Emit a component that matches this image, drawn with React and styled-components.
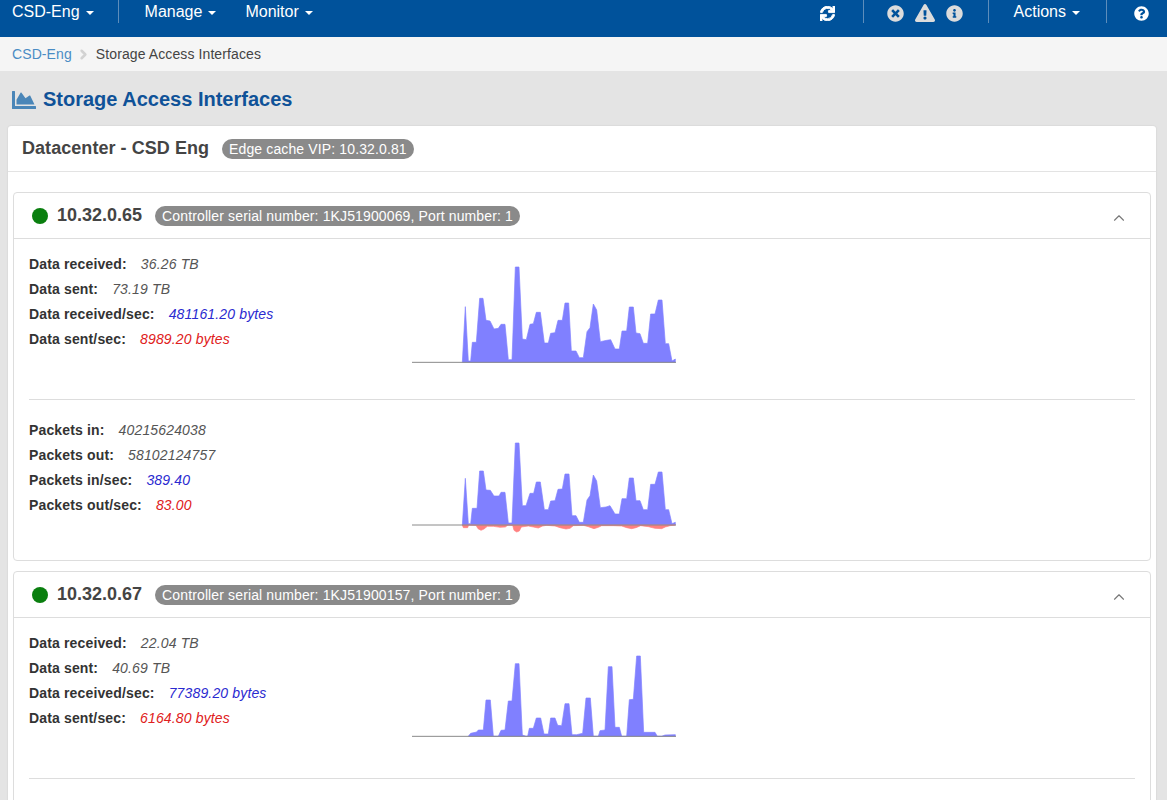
import React from 'react';
import styled, { createGlobalStyle } from 'styled-components';
import { FaSync, FaTimesCircle, FaExclamationTriangle, FaInfoCircle, FaQuestionCircle, FaChartArea } from 'react-icons/fa';
import { ChevronUp, ChevronRight } from 'lucide-react';

const Global = createGlobalStyle`
  html, body { margin: 0; padding: 0; height: 800px; overflow: hidden; background: #e4e4e4; }
  body { font-family: "Liberation Sans", Arial, sans-serif; font-size: 14px; color: #333; }
  * { box-sizing: border-box; }
`;
const Page = styled.div`height: 800px; overflow: hidden;`;
const Nav = styled.nav`
  height: 37px; background: #00529b; color: #fff; display: flex; align-items: flex-start;
  justify-content: space-between; font-size: 16px;
`;
const NavGroup = styled.div`display: flex; align-items: flex-start;`;
const NavItem = styled.div`
  height: 23px; line-height: 23px; display: flex; align-items: center; gap: 6px; white-space: nowrap;
  padding: 0 ${p => p.$right ?? 0}px 0 ${p => p.$left ?? 0}px;
`;
const Caret = styled.span`
  width: 0; height: 0; border-left: 4px solid transparent; border-right: 4px solid transparent;
  border-top: 4px solid #fff; margin-top: 2px;
`;
const Sep = styled.span`width: 1px; height: 23px; background: #5d8dbb;`;
const IconBtn = styled.span`
  display: flex; align-items: center; justify-content: center; width: ${p => p.$w}px; height: 26px;
  padding-left: ${p => p.$pad || 0}px;
  color: ${p => p.$c || '#fff'}; font-size: ${p => p.$s || 16}px;
  svg { stroke: currentColor; stroke-width: ${p => p.$bold || 0}; }
`;
const IconGroup = styled.div`display: flex; padding: 0 19px;`;
const Crumbs = styled.div`
  height: 34px; background: #f5f5f5; display: flex; align-items: center; padding-left: 12px;
  font-size: 14px; letter-spacing: .1px; color: #444;
`;
const CrumbLink = styled.a`color: #4a8cc4;`;
const CrumbSep = styled.span`display: flex; width: 24px; justify-content: center; color: #d2d2d2;`;
const TitleRow = styled.h1`
  margin: 0; height: 55px; display: flex; align-items: center; gap: 7px; padding: 2px 0 0 12px;
  font-size: 20px; font-weight: 700; color: #0f5298;
  svg { color: #4a86b8; font-size: 24px; }
`;
const Card = styled.section`
  margin: 0 11px 0 8px; background: #fff; border-radius: 3px; box-shadow: 0 0 2px rgba(0,0,0,.12);
`;
const CardHead = styled.header`
  height: 46px; display: flex; align-items: center; gap: 13px; padding: 0 0 0 14px; border-bottom: 1px solid #e3e3e3;
`;
const CardTitle = styled.h2`margin: 0; font-size: 18px; font-weight: 700; color: #444; letter-spacing: .05px;`;
const Badge = styled.span`
  background: #8a8a8a; color: #fff; font-size: 14px; line-height: 20px; height: 20px; padding: 0 7px;
  border-radius: 10px; white-space: nowrap; letter-spacing: .13px;
`;
const Panels = styled.div`padding: 20px 5px 0; display: flex; flex-direction: column; gap: 10px;`;
const Panel = styled.article`border: 1px solid #ddd; border-radius: 4px; background: #fff;`;
const PanelHead = styled.header`
  height: 46px; display: flex; align-items: center; padding: 0 22px 0 18px; border-bottom: 1px solid #ddd;
`;
const Dot = styled.span`width: 16px; height: 16px; border-radius: 50%; background: #0a7f0f; margin-right: 9px;`;
const Ip = styled.h3`margin: 0 13px 0 0; font-size: 18px; font-weight: 700; color: #444;`;
const Toggle = styled.span`margin-left: auto; margin-top: 4px; display: flex; color: #777;`;
const Section = styled.div`
  height: 160px; margin: 0 15px; display: grid; grid-template-columns: 383px 264px; align-items: start;
  & + & { border-top: 1px solid #ddd; height: 161px; }
`;
const Stats = styled.dl`margin: 0; padding-top: ${p => p.$top}px; display: flex; flex-direction: column;`;
const Stat = styled.div`height: 25px; line-height: 25px; display: flex; gap: 14px; white-space: nowrap; letter-spacing: .15px;`;
const Key = styled.dt`font-weight: 700; color: #333;`;
const Val = styled.dd`margin: 0; font-style: italic; color: ${p => p.$c || '#555'};`;
const ChartSvg = styled.svg`display: block; width: 264px; height: 150px;`;

const d1 = '187,322 196,155 205,318 212,318 217,262 229,262 239,130 249,130 258,196 270,198 282,222 295,220 303,208 315,208 325,314 336,314 346,36 357,36 367,252 379,254 390,208 400,206 409,172 421,172 433,264 445,264 452,235 465,233 474,196 487,196 495,144 506,144 514,288 528,288 538,308 550,308 561,230 570,218 580,147 590,165 601,260 620,256 632,254 645,282 658,282 666,228 680,228 688,156 700,156 708,234 720,236 730,265 743,265 752,177 765,177 775,135 786,135 796,266 806,266 816,318 826,312 826,322';
const d2 = '187,270 196,130 205,266 212,266 217,220 231,220 239,108 250,108 258,165 271,166 282,183 297,183 303,172 315,172 325,264 336,264 346,24 357,24 367,212 378,212 390,175 401,175 409,141 421,141 433,224 445,224 452,198 465,197 474,163 487,162 495,117 507,117 516,242 528,242 538,262 550,262 561,195 570,182 580,120 590,138 601,218 618,216 630,212 645,237 658,237 666,191 680,191 688,129 700,129 708,197 720,197 730,224 743,224 752,148 765,148 775,111 786,111 796,224 806,224 816,266 826,262 826,270';
const r2 = '187,270 190,278 203,278 206,270 228,271 234,281 243,286 252,282 262,274 280,274 300,277 316,276 324,270 338,271 342,286 350,291 358,288 364,276 385,273 400,276 415,279 428,273 440,271 465,273 480,278 498,282 510,280 520,272 550,271 565,275 582,281 595,277 605,272 640,272 665,273 680,278 695,281 708,278 722,272 745,275 765,280 785,281 796,276 810,272 826,270';
const d3 = '205,259 212,250 230,246 235,240 250,240 258,150 271,150 280,259 295,259 303,241 315,240 325,153 336,153 346,41 357,41 367,255 378,259 383,259 388,235 400,235 409,204 422,204 432,252 445,252 452,204 465,204 473,226 485,227 495,161 507,161 516,254 530,254 548,250 558,144 571,144 580,259 595,259 600,242 615,240 625,50 636,50 645,232 658,232 665,259 680,259 688,149 700,148 710,18 721,18 731,247 765,247 772,259 785,259 795,255 826,254 826,259';

function Chart({ area, red, base, offset }) {
  return (
    <ChartSvg viewBox={`36 ${-offset * 3} 792 450`} preserveAspectRatio="none">
      <polygon points={area} fill="#8080ff" stroke="#8080ff" strokeWidth="2" strokeLinejoin="round" />
      {red && <polygon points={red} fill="#ff8080" stroke="#ff8080" strokeWidth="2" strokeLinejoin="round" />}
      <line x1="36" x2="828" y1={base} y2={base} stroke="#8a8a8a" strokeWidth="3" />
    </ChartSvg>
  );
}

const panels = [
  {
    ip: '10.32.0.65', serial: '1KJ51900069',
    sections: [
      { rows: [['Data received:', '36.26 TB'], ['Data sent:', '73.19 TB'], ['Data received/sec:', '481161.20 bytes', '#2a2ad0'], ['Data sent/sec:', '8989.20 bytes', '#e02020']], area: d1, base: 322, offset: 16 },
      { rows: [['Packets in:', '40215624038'], ['Packets out:', '58102124757'], ['Packets in/sec:', '389.40', '#2a2ad0'], ['Packets out/sec:', '83.00', '#e02020']], area: d2, red: r2, base: 270, offset: 35 },
    ],
  },
  {
    ip: '10.32.0.67', serial: '1KJ51900157',
    sections: [
      { rows: [['Data received:', '22.04 TB'], ['Data sent:', '40.69 TB'], ['Data received/sec:', '77389.20 bytes', '#2a2ad0'], ['Data sent/sec:', '6164.80 bytes', '#e02020']], area: d3, base: 259, offset: 32 },
    ],
  },
];

export default function App() {
  return (
    <Page>
      <Global />
      <Nav>
        <NavGroup>
          <NavItem $left={12} $right={24}>CSD-Eng <Caret /></NavItem>
          <Sep />
          <NavItem $left={26} $right={29}>Manage <Caret /></NavItem>
          <NavItem>Monitor <Caret /></NavItem>
        </NavGroup>
        <NavGroup>
          <IconBtn $w={71} $s={15} $bold={30}><FaSync /></IconBtn>
          <Sep />
          <IconGroup>
            <IconBtn $w={26} $s={17} $c="#dcdcdc"><FaTimesCircle /></IconBtn>
            <IconBtn $w={32} $s={20} $c="#dcdcdc"><FaExclamationTriangle /></IconBtn>
            <IconBtn $w={28} $s={17} $c="#dcdcdc"><FaInfoCircle /></IconBtn>
          </IconGroup>
          <Sep />
          <NavItem $left={25} $right={26}>Actions <Caret /></NavItem>
          <Sep />
          <IconBtn $w={60} $pad={8} $s={15}><FaQuestionCircle /></IconBtn>
        </NavGroup>
      </Nav>
      <Crumbs>
        <CrumbLink>CSD-Eng</CrumbLink>
        <CrumbSep><ChevronRight size={15} strokeWidth={4} /></CrumbSep>
        <span>Storage Access Interfaces</span>
      </Crumbs>
      <TitleRow><FaChartArea />Storage Access Interfaces</TitleRow>
      <Card>
        <CardHead>
          <CardTitle>Datacenter - CSD Eng</CardTitle>
          <Badge>Edge cache VIP: 10.32.0.81</Badge>
        </CardHead>
        <Panels>
          {panels.map(p => (
            <Panel key={p.ip}>
              <PanelHead>
                <Dot />
                <Ip>{p.ip}</Ip>
                <Badge>Controller serial number: {p.serial}, Port number: 1</Badge>
                <Toggle><ChevronUp size={18} strokeWidth={1.5} /></Toggle>
              </PanelHead>
              {p.sections.map((s, i) => (
                <Section key={i}>
                  <Stats $top={i === 1 ? 18 : 13}>
                    {s.rows.map(([k, v, c]) => (
                      <Stat key={k}><Key>{k}</Key><Val $c={c}>{v}</Val></Stat>
                    ))}
                  </Stats>
                  <Chart area={s.area} red={s.red} base={s.base} offset={s.offset} />
                </Section>
              ))}
              {p.sections.length === 1 && <Section />}
            </Panel>
          ))}
        </Panels>
      </Card>
    </Page>
  );
}
